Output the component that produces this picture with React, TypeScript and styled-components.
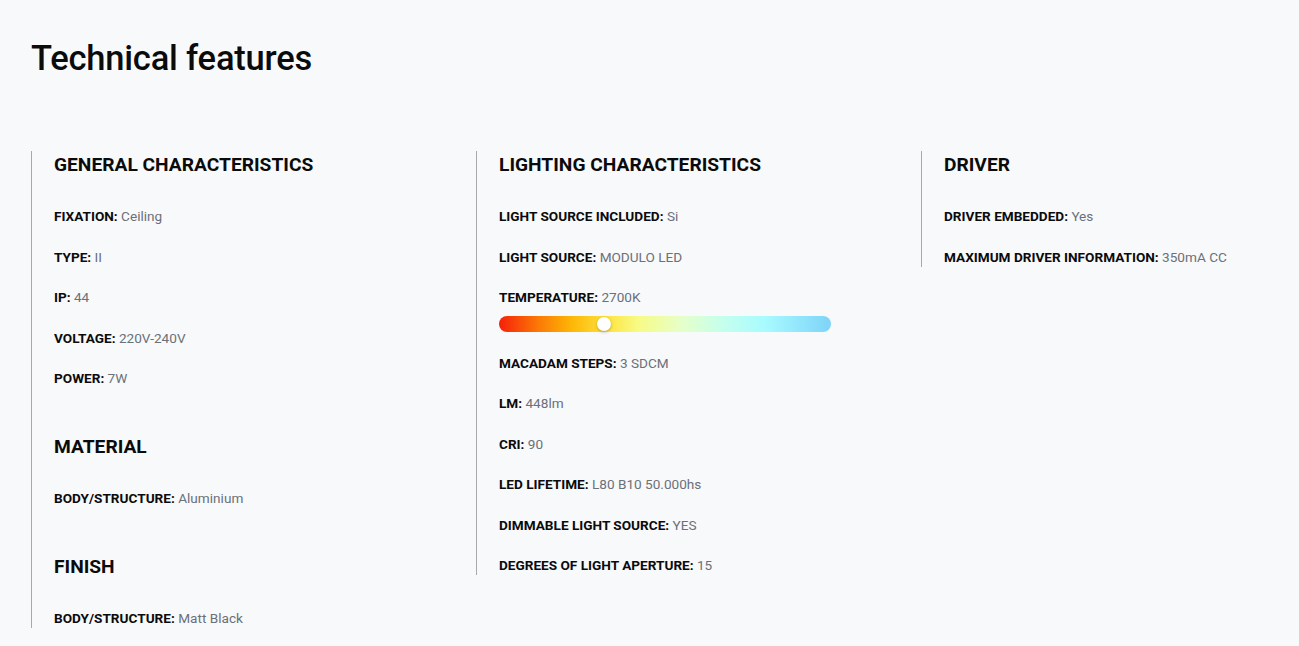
import { VFC } from 'react';
import styled, { createGlobalStyle } from 'styled-components';

const GlobalStyle = createGlobalStyle`
  * {
    box-sizing: border-box;
  }

  body {
    margin: 0;
    background: #f8f9fb;
    font-family: Roboto, 'Liberation Sans', sans-serif;
    color: #0b0b0b;
  }
`;

const Page = styled.div`
  padding: 38px 31px 0;
`;

const Title = styled.h2`
  margin: 0 0 73px;
  font-size: 34.5px;
  line-height: 40px;
  font-weight: 500;
  letter-spacing: -0.2px;
`;

const Columns = styled.div`
  display: grid;
  grid-template-columns: 445px 445px 1fr;
  align-items: start;
`;

const Column = styled.div`
  padding-left: 22px;
  border-left: 1px solid #a9a9a9;

  section + section {
    margin-top: 45px;
  }
`;

const Heading = styled.h3`
  margin: 0 0 28px;
  font-size: 19.2px;
  line-height: 27px;
  font-weight: 700;
  text-transform: uppercase;
`;

const List = styled.div`
  display: flex;
  flex-direction: column;
  gap: 20.5px;
`;

const Item = styled.div`
  font-size: 13.6px;
  line-height: 20px;

  b {
    font-weight: 700;
  }

  span {
    color: #6b7079;
  }
`;

const TempBar = styled.div`
  position: relative;
  width: 332px;
  height: 16px;
  margin-top: 9px;
  border-radius: 8px;
  background: linear-gradient(
    90deg,
    #f5200a 0%,
    #fb7a06 12%,
    #fdb707 22%,
    #fde542 33%,
    #f7fb86 42%,
    #e6ffc9 55%,
    #c6ffec 67%,
    #a8fbff 80%,
    #7ed3f8 100%
  );
`;

const Thumb = styled.div`
  position: absolute;
  top: 50%;
  width: 14px;
  height: 14px;
  border-radius: 50%;
  background: #fff;
  box-shadow: 0 1px 3px rgba(120, 80, 0, 0.45);
  transform: translate(-50%, -50%);
`;

type Feature = [string, string];

type Group = {
  title: string;
  items: Feature[];
};

const columns: Group[][] = [
  [
    {
      title: 'General characteristics',
      items: [
        ['FIXATION', 'Ceiling'],
        ['TYPE', 'II'],
        ['IP', '44'],
        ['VOLTAGE', '220V-240V'],
        ['POWER', '7W'],
      ],
    },
    { title: 'Material', items: [['BODY/STRUCTURE', 'Aluminium']] },
    { title: 'Finish', items: [['BODY/STRUCTURE', 'Matt Black']] },
  ],
  [
    {
      title: 'Lighting characteristics',
      items: [
        ['LIGHT SOURCE INCLUDED', 'Si'],
        ['LIGHT SOURCE', 'MODULO LED'],
        ['TEMPERATURE', '2700K'],
        ['MACADAM STEPS', '3 SDCM'],
        ['LM', '448lm'],
        ['CRI', '90'],
        ['LED LIFETIME', 'L80 B10 50.000hs'],
        ['DIMMABLE LIGHT SOURCE', 'YES'],
        ['DEGREES OF LIGHT APERTURE', '15'],
      ],
    },
  ],
  [
    {
      title: 'Driver',
      items: [
        ['DRIVER EMBEDDED', 'Yes'],
        ['MAXIMUM DRIVER INFORMATION', '350mA CC'],
      ],
    },
  ],
];

// warm to cold: 2700K sits around a third of the bar
const tempPosition = (kelvin: number) => ((kelvin - 1800) / (4650 - 1800)) * 100;

const FeatureRow: VFC<{ item: Feature }> = ({ item }) => {
  const [label, value] = item;
  return (
    <Item>
      <b>{label}:</b> <span>{value}</span>
      {label === 'TEMPERATURE' && (
        <TempBar>
          <Thumb style={{ left: `${tempPosition(parseInt(value, 10))}%` }} />
        </TempBar>
      )}
    </Item>
  );
};

const App: VFC = () => (
  <Page>
    <GlobalStyle />
    <Title>Technical features</Title>
    <Columns>
      {columns.map((groups, i) => (
        <Column key={i}>
          {groups.map(group => (
            <section key={group.title}>
              <Heading>{group.title}</Heading>
              <List>
                {group.items.map(item => (
                  <FeatureRow key={item[0]} item={item} />
                ))}
              </List>
            </section>
          ))}
        </Column>
      ))}
    </Columns>
  </Page>
);

export default App;
